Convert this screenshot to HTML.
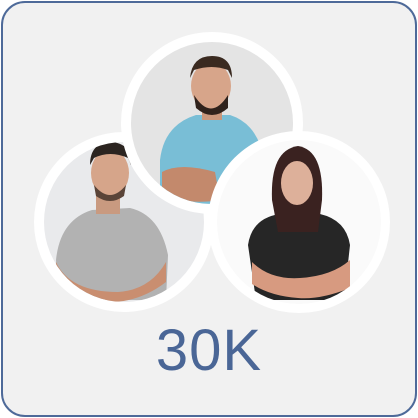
<!DOCTYPE html>
<html><head><style>
html,body{margin:0;padding:0;width:418px;height:418px;background:#fff;overflow:hidden}
.card{position:absolute;left:1px;top:1px;width:412px;height:412px;border:2.5px solid #4e6a99;border-radius:24px;background:#f1f1f1;box-sizing:content-box;}
svg{position:absolute;left:0;top:0}
.t{position:absolute;left:0;width:418px;top:317px;text-align:center;font-family:"Liberation Sans",sans-serif;font-size:58px;color:#4a6696;letter-spacing:1px}
</style></head><body>
<div class="card"></div>
<svg width="418" height="418" viewBox="0 0 418 418">
<defs>
<clipPath id="cl"><circle cx="124" cy="222" r="80"/></clipPath>
<clipPath id="ct"><circle cx="212" cy="123" r="81"/></clipPath>
<clipPath id="cr"><circle cx="299" cy="222" r="82"/></clipPath>
</defs>
<circle cx="124" cy="222" r="90" fill="#fff"/>
<g clip-path="url(#cl)">
<rect x="30" y="130" width="200" height="200" fill="#e9eaec"/>
<path d="M56 260 Q60 220 92 210 L130 208 Q160 215 168 255 L166 300 L58 300Z" fill="#b2b2b2"/>
<rect x="96" y="190" width="24" height="24" fill="#c99a80"/>
<ellipse cx="110" cy="173" rx="19" ry="24" fill="#d6a58a"/>
<path d="M90 165 Q90 142 112 142 Q132 144 131 165 L128 158 Q110 150 94 158Z" fill="#2b2420"/>
<path d="M94 185 Q110 205 126 185 L124 196 Q110 206 96 196Z" fill="#5a4438"/>
<path d="M56 262 Q70 292 118 292 Q150 290 166 262 L166 282 Q140 302 110 302 Q70 300 56 280Z" fill="#c98e70"/>
</g>
<circle cx="212" cy="123" r="91" fill="#fff"/>
<g clip-path="url(#ct)">
<rect x="120" y="30" width="190" height="190" fill="#e4e4e4"/>
<path d="M160 160 Q164 125 196 115 L230 115 Q258 124 264 160 L262 220 L160 220Z" fill="#79bed6"/>
<rect x="202" y="100" width="20" height="20" fill="#c9977c"/>
<ellipse cx="211" cy="86" rx="20" ry="24" fill="#d7a58a"/>
<path d="M190 78 Q192 56 212 56 Q232 56 232 78 L228 70 Q212 64 194 70Z" fill="#3a2a20"/>
<path d="M194 95 Q211 122 228 95 L228 108 Q212 122 196 108Z" fill="#2f221c"/>
<path d="M162 172 Q180 162 215 172 L220 200 Q185 206 162 192Z" fill="#c3896c"/>
</g>
<circle cx="299" cy="222" r="91" fill="#fff"/>
<g clip-path="url(#cr)">
<rect x="208" y="130" width="190" height="190" fill="#fafafa"/>
<path d="M248 245 Q252 218 280 214 L320 214 Q346 220 350 245 L344 300 L256 300Z" fill="#262626"/>
<path d="M272 200 Q270 150 298 146 Q324 150 322 200 L318 232 L278 232Z" fill="#3a2220"/>
<ellipse cx="297" cy="183" rx="16" ry="22" fill="#ddb09a"/>
<path d="M252 262 Q270 280 300 278 Q332 276 350 260 L350 288 Q320 300 298 298 Q270 296 252 284Z" fill="#d79a80"/>
</g>
</svg>
<div class="t">30K</div>
</body></html>
